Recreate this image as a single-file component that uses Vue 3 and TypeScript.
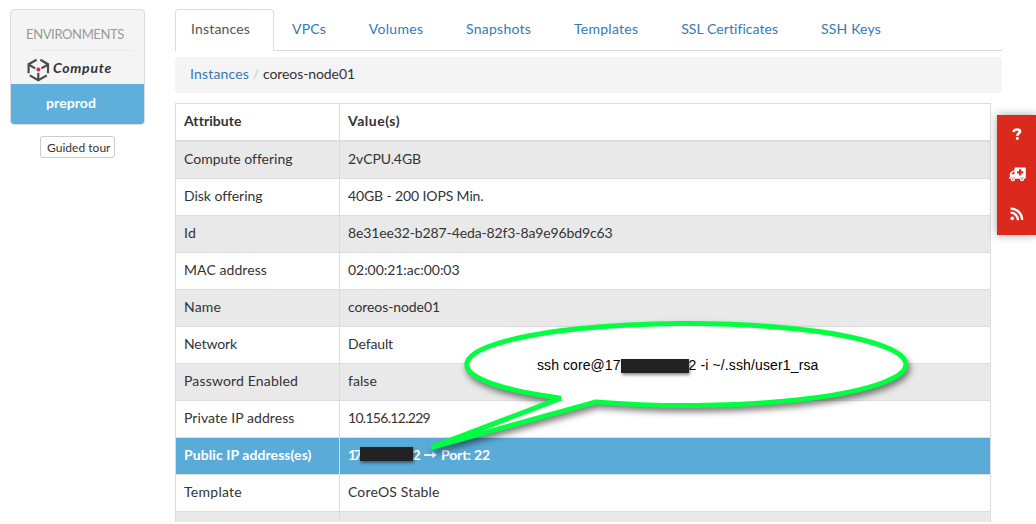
<script setup lang="ts">
import type { Directive } from 'vue'

interface Fitted {
  label: string
  width: number
}

interface Row {
  name: Fitted
  value?: Fitted
}

// Tracks a label so that it occupies the given advance width.
const vFit: Directive<HTMLElement, number> = {
  mounted(el, { value }) {
    const natural = el.getBoundingClientRect().width
    const count = (el.textContent ?? '').length
    const spacing = (value - natural) / Math.max(count, 1)
    el.style.letterSpacing = `${spacing.toFixed(3)}px`
  },
}

const tabs: Fitted[] = [
  { label: 'VPCs', width: 34 },
  { label: 'Volumes', width: 54.5 },
  { label: 'Snapshots', width: 65 },
  { label: 'Templates', width: 64.5 },
  { label: 'SSL Certificates', width: 97 },
  { label: 'SSH Keys', width: 60 },
]

const rows: Row[] = [
  { name: { label: 'Compute offering', width: 108 }, value: { label: '2vCPU.4GB', width: 73 } },
  { name: { label: 'Disk offering', width: 78 }, value: { label: '40GB - 200 IOPS Min.', width: 135.5 } },
  { name: { label: 'Id', width: 12 }, value: { label: '8e31ee32-b287-4eda-82f3-8a9e96bd9c63', width: 264.5 } },
  { name: { label: 'MAC address', width: 83 }, value: { label: '02:00:21:ac:00:03', width: 111.5 } },
  { name: { label: 'Name', width: 37 }, value: { label: 'coreos-node01', width: 92 } },
  { name: { label: 'Network', width: 53 }, value: { label: 'Default', width: 45 } },
  { name: { label: 'Password Enabled', width: 114 }, value: { label: 'false', width: 29 } },
  { name: { label: 'Private IP address', width: 110.5 }, value: { label: '10.156.12.229', width: 82 } },
  { name: { label: 'Public IP address(es)', width: 127.5 } },
  { name: { label: 'Template', width: 58 }, value: { label: 'CoreOS Stable', width: 91.5 } },
]
</script>

<template>
  <div class="page">
    <aside class="sidebar">
      <div class="env">
        <div class="env-title"><span v-fit="98">ENVIRONMENTS</span></div>
        <div class="env-line"></div>
        <div class="compute">
          <svg width="24" height="26" viewBox="0 0 24 26">
            <g fill="none" stroke="#4b4b4d" stroke-width="2.2">
              <path d="M10.6 2.7 2.6 7.2v9M14.4 2.7l7.6 4.5v9" />
              <path d="M3.8 18.4 12.3 23.2l8.5-4.8" />
              <path d="M3.4 8 9.2 11.4M21.2 8l-5.8 3.4M12.3 15.7V23" />
            </g>
            <circle cx="12.4" cy="12.6" r="2" fill="#f0222b" />
          </svg>
          <em v-fit="59">Compute</em>
        </div>
        <div class="preprod"><span v-fit="50">preprod</span></div>
      </div>
      <button class="tour" type="button"><span v-fit="63.5">Guided tour</span></button>
    </aside>

    <main class="main">
      <nav class="tabs">
        <a class="tab active"><span v-fit="59">Instances</span></a>
        <a v-for="t in tabs" :key="t.label" class="tab"><span v-fit="t.width">{{ t.label }}</span></a>
      </nav>
      <div class="crumbs">
        <a><span v-fit="59">Instances</span></a>
        <i>/</i>
        <span v-fit="92">coreos-node01</span>
      </div>
      <div class="table">
        <div class="row head">
          <div class="cell"><span v-fit="57">Attribute</span></div>
          <div class="cell"><span v-fit="52">Value(s)</span></div>
        </div>
        <div v-for="r in rows" :key="r.name.label" class="row" :class="{ hot: !r.value }">
          <div class="cell"><span v-fit="r.name.width">{{ r.name.label }}</span></div>
          <div v-if="r.value" class="cell"><span v-fit="r.value.width">{{ r.value.label }}</span></div>
          <div v-else class="cell ip">
            <span v-fit="11.5">17</span><b class="mask"></b><span v-fit="7.5">2</span>
            <svg class="arrow" width="13" height="10" viewBox="0 0 13 10">
              <path d="M0 5h10" stroke="#fff" stroke-width="1.7" />
              <path d="M8.4 1.7 12.8 5 8.4 8.3z" fill="#fff" />
            </svg>
            <span v-fit="49">Port: 22</span>
          </div>
        </div>
        <div class="row"><div class="cell"></div><div class="cell"></div></div>
      </div>
    </main>

    <div class="dock">
      <div class="dock-item">
        <svg width="10" height="12" viewBox="0 0 10 12">
          <path d="M1.6 4C1.9 2.3 3.1 1.5 4.9 1.5c1.8 0 3.1.8 3.1 2.1C8 5.4 5.3 5.2 5.3 7.8" fill="none" stroke="#fff" stroke-width="2.7" />
          <path d="M3.9 9h2.8v2.7H3.9z" fill="#fff" />
        </svg>
      </div>
      <div class="dock-item">
        <svg width="17" height="15" viewBox="0 0 17 15">
          <path fill="#fff" fill-rule="evenodd" d="M6 .5h10.2q.6 0 .6.6v9.6q0 1-1 1h-.5a2.3 2.3 0 0 0-4.5 0H6.2a2.3 2.3 0 0 0-4.5 0H.3v-1.2h.5V6.9q0-.5.4-.9l2-2q.5-.5 1.1-.5h1.2V1q0-.5.5-.5ZM2.2 7.3h3.3V4.8H4.3ZM10 2.2v2H8v2.2h2v2h2.3v-2h2V4.2h-2v-2Z" />
          <g fill="none" stroke="#fff" stroke-width="1.3">
            <circle cx="3.9" cy="12.2" r="1.4" /><circle cx="13" cy="12.2" r="1.4" />
          </g>
        </svg>
      </div>
      <div class="dock-item">
        <svg width="14" height="14" viewBox="0 0 14 14">
          <circle cx="2.3" cy="11.4" r="1.8" fill="#fff" />
          <g fill="none" stroke="#fff" stroke-width="2.3">
            <path d="M.6 5.7a7.2 7.2 0 0 1 7.3 7.4" /><path d="M.6 1.6a11.5 11.5 0 0 1 11.6 11.5" />
          </g>
        </svg>
      </div>
    </div>

    <svg class="bubble" width="500" height="160" viewBox="420 310 500 160">
      <path
        d="M561 398.16 431 447.6 596 401.87A219.5 41 0 1 0 561 398.16"
        fill="#fff" stroke="#00ff40" stroke-width="5" stroke-linejoin="bevel"
      />
    </svg>
    <div class="command">
      <span v-fit="83.5">ssh core@17</span><b class="mask wide"></b><span v-fit="130">2 -i ~/.ssh/user1_rsa</span>
    </div>
  </div>
</template>

<style>
body {
  margin: 0;
  background: #fff;
}
</style>

<style scoped>
.page {
  position: relative;
  display: flex;
  box-sizing: border-box;
  width: 1036px;
  height: 522px;
  padding: 9px 0 0 10px;
  overflow: hidden;
  background: #fff;
  color: #333;
  font: 14px/20px Lato, 'Liberation Sans', sans-serif;
}
span,
em {
  white-space: pre;
}
.sidebar {
  width: 135px;
  margin-right: 30px;
  flex: none;
}
.env {
  box-sizing: border-box;
  height: 116px;
  border: 1px solid #ddd;
  border-radius: 4px;
  background: #f4f4f4;
  overflow: hidden;
}
.env-title {
  height: 40px;
  padding-left: 15px;
  box-sizing: border-box;
  padding-top: 14px;
  color: #999;
  font-size: 13px;
}
.env-line {
  height: 1px;
  margin: 0 11px 0 20px;
  background: #e8e8e8;
}
.compute {
  display: flex;
  height: 33px;
  padding-left: 15px;
  align-items: center;
}
.compute svg {
  margin: 5px 3px 0 0;
}
.compute em {
  font-weight: 700;
  margin-top: 1px;
}
.preprod {
  height: 40px;
  line-height: 38px;
  padding-left: 35px;
  background: #5eb0db;
  color: #fff;
  font-weight: 700;
}
.tour {
  display: block;
  box-sizing: border-box;
  width: 75px;
  height: 22px;
  margin: 11px 0 0 30px;
  padding: 1px 0 0 6px;
  border: 1px solid #ccc;
  border-radius: 3px;
  background: #fff;
  color: #333;
  font: 12px/18px Lato, sans-serif;
  text-align: left;
}
.main {
  width: 827px;
  flex: none;
}
.tabs {
  display: flex;
  height: 41px;
  border-bottom: 1px solid #ddd;
}
.tab {
  box-sizing: border-box;
  height: 41px;
  margin-right: 2px;
  padding: 9px 15px 0;
  border: 1px solid transparent;
  border-bottom: 0;
  border-radius: 4px 4px 0 0;
  color: #337ab7;
}
.tab + .tab {
  padding-right: 23.8px;
}
.tab.active {
  width: 99px;
  height: 42px;
  border-color: #ddd;
  background: #fff;
  color: #555;
}
.crumbs {
  display: flex;
  box-sizing: border-box;
  height: 36px;
  margin: 6px 0 10px;
  padding: 7px 15px;
  border-radius: 4px;
  background: #f4f4f4;
}
.crumbs a {
  color: #337ab7;
}
.crumbs i {
  width: 14px;
  color: #ccc;
  font-style: normal;
  text-align: center;
}
.table {
  width: 814px;
  border: 1px solid #ddd;
}
.row {
  display: grid;
  grid-template-columns: 163px 1fr;
  height: 36px;
  border-bottom: 1px solid #ddd;
}
.row:nth-child(even) {
  background: #e9e9e9;
}
.row.head {
  border-bottom-width: 2px;
  font-weight: 700;
}
.row.hot {
  background: #5aabd8;
  color: #fff;
  font-weight: 700;
}
.cell {
  padding: 7px 8px 0;
}
.cell + .cell {
  border-left: 1px solid #ddd;
}
.ip {
  display: flex;
}
.mask {
  width: 53px;
  height: 14px;
  margin-top: 2px;
  background: #222;
  box-shadow: 1px 2px 3px rgba(0, 0, 0, 0.45);
  position: relative;
}
.arrow {
  margin: 5px 4px 0 4px;
}
.dock {
  position: absolute;
  left: 997px;
  top: 115px;
  width: 39px;
  height: 120px;
  background: #db291e;
  box-shadow: 0 0 9px rgba(0, 0, 0, 0.35);
}
.dock-item {
  display: flex;
  box-sizing: border-box;
  height: 40px;
  align-items: center;
  justify-content: center;
  padding: 0 0 2px 1px;
}
.bubble {
  position: absolute;
  left: 420px;
  top: 310px;
  filter: drop-shadow(2px 4px 3px rgba(0, 0, 0, 0.5));
}
.command {
  position: absolute;
  display: flex;
  left: 537px;
  top: 355px;
  color: #000;
  font: 14px/20px 'Liberation Sans', Arial, sans-serif;
}
.mask.wide {
  width: 68px;
  margin-top: 3.5px;
}
</style>
